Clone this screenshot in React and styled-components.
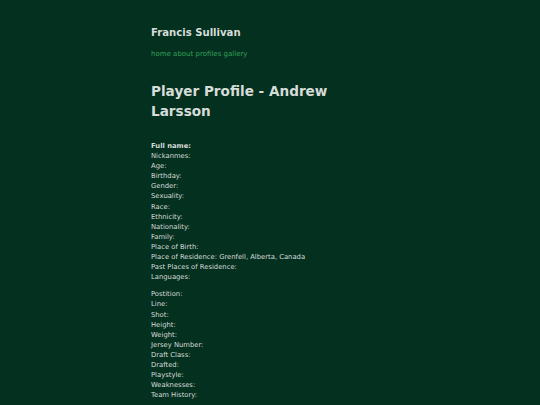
import React from 'react';
import styled, { createGlobalStyle } from 'styled-components';

const GlobalStyle = createGlobalStyle`
  html, body {
    margin: 0;
    padding: 0;
    background: #04301f;
  }
  body {
    font-family: "DejaVu Sans", Verdana, sans-serif;
    color: #d6dcd7;
  }
`;

const Page = styled.div`
  width: 238px;
  margin: 0 auto;
  padding-top: 26px;
`;

const SiteTitle = styled.div`
  font-size: 10.1px;
  font-weight: bold;
  line-height: 14px;
`;

const Nav = styled.nav`
  margin-top: 9px;
  font-size: 7px;
  line-height: 10px;
`;

const NavLink = styled.a`
  color: #33a05a;
  text-decoration: none;
`;

const Heading = styled.h1`
  margin: 22px 0 0;
  font-size: 13.6px;
  line-height: 20px;
  font-weight: bold;
`;

const Block = styled.div`
  margin-top: ${p => p.$gap || 0}px;
  font-size: 6.8px;
  line-height: 10.1px;
`;

const Line = styled.div`
  font-weight: ${p => (p.$bold ? 'bold' : 'normal')};
`;

const personal = [
  ['Full name:', '', true],
  ['Nickanmes:', ''],
  ['Age:', ''],
  ['Birthday:', ''],
  ['Gender:', ''],
  ['Sexuality:', ''],
  ['Race:', ''],
  ['Ethnicity:', ''],
  ['Nationality:', ''],
  ['Family:', ''],
  ['Place of Birth:', ''],
  ['Place of Residence:', 'Grenfell, Alberta, Canada'],
  ['Past Places of Residence:', ''],
  ['Languages:', ''],
];

const hockey = [
  'Postition:',
  'Line:',
  'Shot:',
  'Height:',
  'Weight:',
  'Jersey Number:',
  'Draft Class:',
  'Drafted:',
  'Playstyle:',
  'Weaknesses:',
  'Team History:',
];

const links = ['home', 'about', 'profiles', 'gallery'];

export default function App() {
  return (
    <>
      <GlobalStyle />
      <Page>
        <SiteTitle>Francis Sullivan</SiteTitle>
        <Nav>
          {links.map((l, i) => (
            <React.Fragment key={l}>
              <NavLink href="#">{l}</NavLink>
              {i < links.length - 1 ? ' ' : ''}
            </React.Fragment>
          ))}
        </Nav>
        <Heading>Player Profile - Andrew Larsson</Heading>
        <Block $gap={20}>
          {personal.map(([label, value, bold]) => (
            <Line key={label} $bold={bold}>
              {label}{value ? ' ' + value : ''}
            </Line>
          ))}
        </Block>
        <Block $gap={7}>
          {hockey.map(label => (
            <Line key={label}>{label}</Line>
          ))}
        </Block>
      </Page>
    </>
  );
}
